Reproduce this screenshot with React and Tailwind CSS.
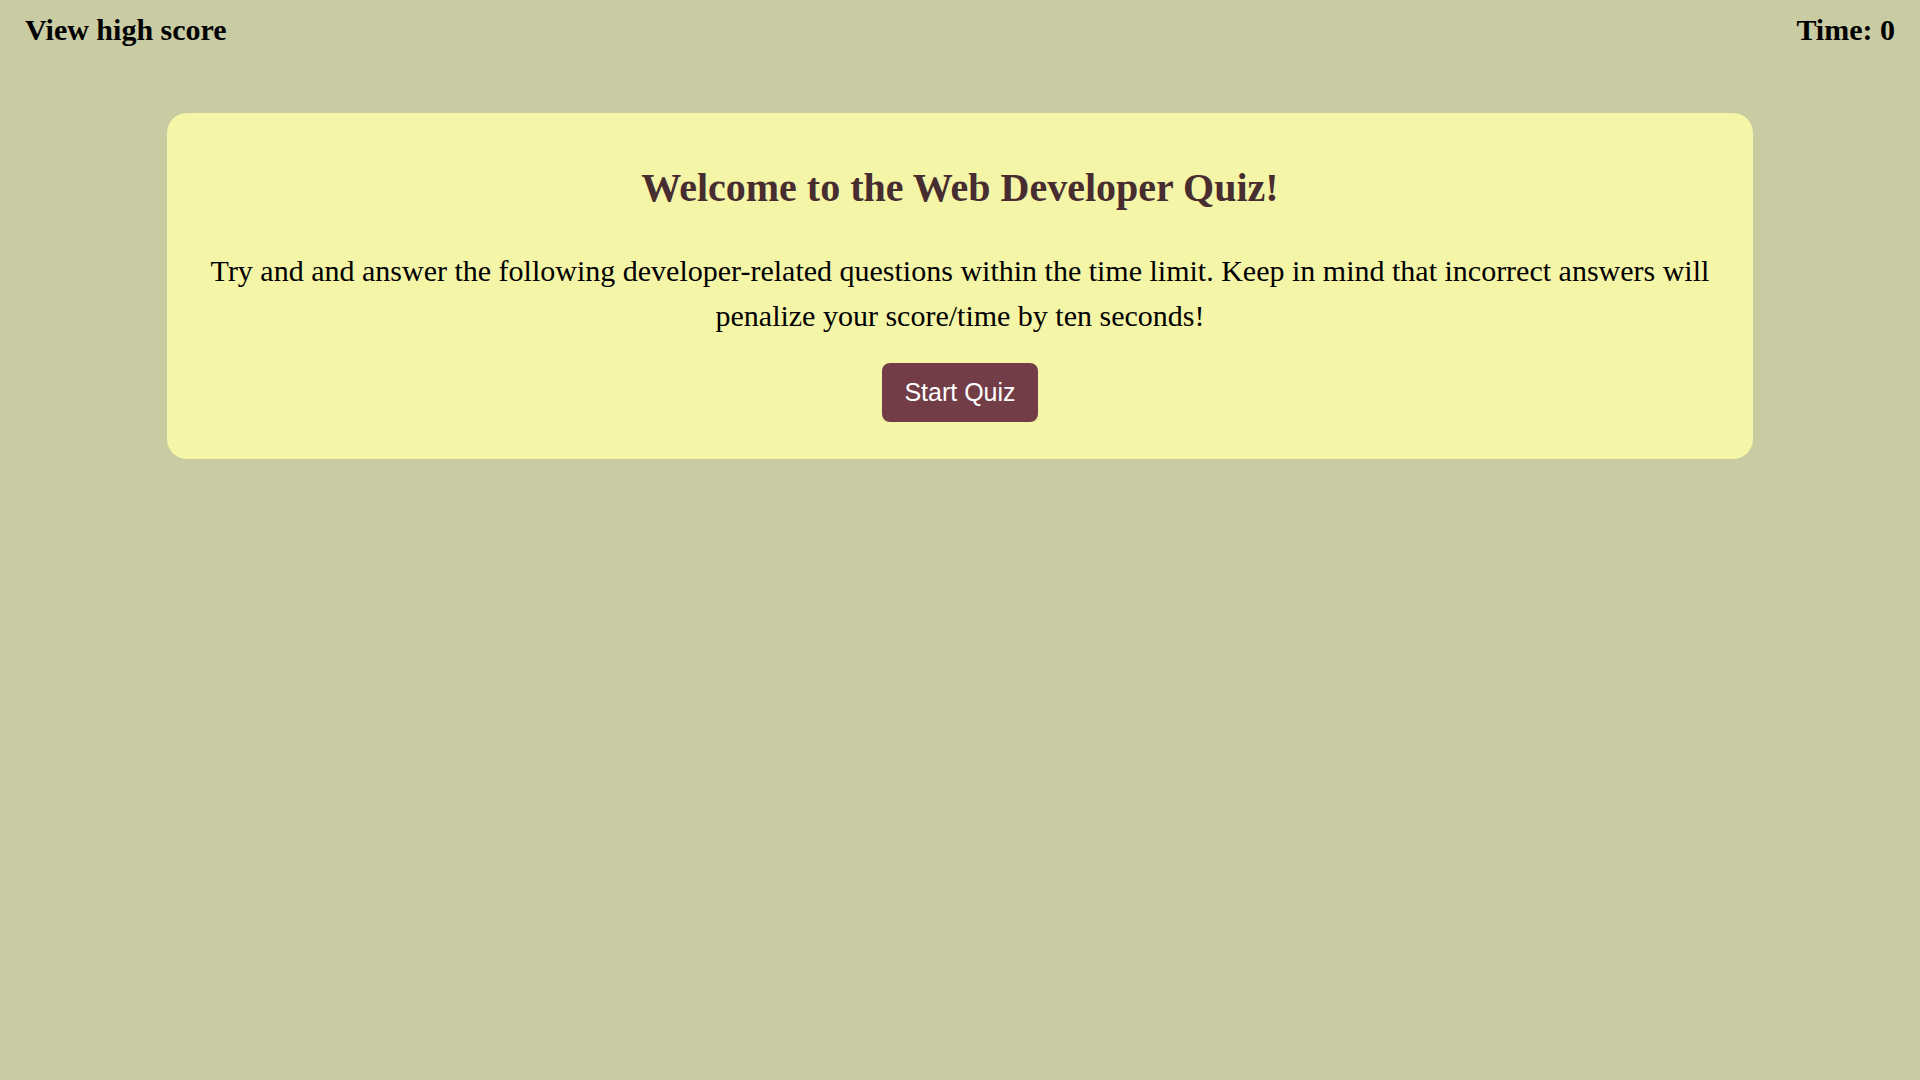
export default function App() {
  return (
    <div
      className="min-h-screen bg-[#c9cba3] text-black"
      style={{ fontFamily: '"Liberation Serif", "Times New Roman", serif' }}
    >
      <header className="flex justify-between px-[25px] pt-[13px] text-[30px] leading-[34px] font-bold">
        <span>View high score</span>
        <span>Time: 0</span>
      </header>

      <main className="mx-auto mt-[66px] w-[1586px] rounded-[20px] bg-[#f4f5a6] px-[20px] pt-[52px] pb-[37px] text-center">
        <h1 className="text-[40px] leading-[46px] font-bold text-[#472d30]">
          Welcome to the Web Developer Quiz!
        </h1>
        <p className="mt-[37px] text-[30px] leading-[45px]">
          Try and and answer the following developer-related questions within the time limit. Keep in mind that incorrect answers will penalize your score/time by ten seconds!
        </p>
        <button
          className="mt-[25px] h-[59px] w-[156px] rounded-[8px] bg-[#723d46] text-[25px] text-white"
          style={{ fontFamily: '"Liberation Sans", Arial, sans-serif' }}
        >
          Start Quiz
        </button>
      </main>
    </div>
  );
}
